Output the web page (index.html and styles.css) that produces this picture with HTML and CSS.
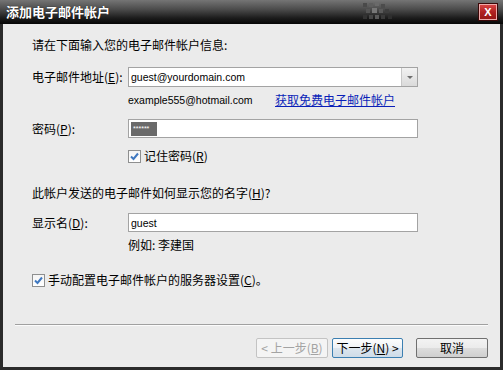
FILE: index.html
```html
<!DOCTYPE html>
<html lang="zh-CN">
<head>
    <meta charset="UTF-8">
    <title>添加电子邮件帐户</title>
    <link rel="stylesheet" href="styles.css">
</head>
<body>
<div class="window">
    <div class="titlebar">
        <span class="title">添加电子邮件帐户</span>
        <svg class="deco" width="30" height="20" viewBox="0 0 30 20">
            <rect x="0" y="1" width="4" height="4" fill="#4a4a4a"/>
            <rect x="6" y="1" width="4" height="4" fill="#5e5e5e"/>
            <rect x="12" y="0" width="4" height="4" fill="#6a6a6a"/>
            <rect x="18" y="2" width="4" height="4" fill="#4c4c4c"/>
            <rect x="3" y="7" width="4" height="4" fill="#555"/>
            <rect x="9" y="6" width="5" height="5" fill="#777"/>
            <rect x="16" y="7" width="4" height="4" fill="#5a5a5a"/>
            <rect x="22" y="7" width="4" height="4" fill="#3e3e3e"/>
            <rect x="0" y="13" width="4" height="4" fill="#333"/>
            <rect x="6" y="13" width="4" height="4" fill="#464646"/>
            <rect x="12" y="13" width="4" height="4" fill="#5a5a5a"/>
            <rect x="18" y="13" width="4" height="4" fill="#3a3a3a"/>
            <rect x="25" y="13" width="4" height="4" fill="#2e2e2e"/>
        </svg>
        <div class="close">X</div>
    </div>
    <div class="panel">
        <p class="intro">请在下面输入您的电子邮件帐户信息:</p>

        <div class="row row-email">
            <span class="lbl">电子邮件地址(<u>E</u>):</span>
            <div class="field combo">
                <span class="en">guest@yourdomain.com</span>
                <span class="drop"><i></i></span>
            </div>
        </div>
        <div class="sub">
            <span class="en sample">example555@hotmail.com</span>
            <a class="link" href="#">获取免费电子邮件帐户</a>
        </div>

        <div class="row row-pass">
            <span class="lbl">密码(<u>P</u>):</span>
            <div class="field small">
                <span class="stars">******</span>
            </div>
        </div>
        <div class="sub check-row">
            <span class="box"><svg width="13" height="13" viewBox="0 0 13 13"><path d="M3 6.5 L5.5 9 L10 3.5" fill="none" stroke="#3f78c0" stroke-width="2"/></svg></span>
            <span>记住密码(<u>R</u>)</span>
        </div>

        <p class="question">此帐户发送的电子邮件如何显示您的名字(<u>H</u>)?</p>

        <div class="row row-name">
            <span class="lbl">显示名(<u>D</u>):</span>
            <div class="field small">
                <span class="en">guest</span>
            </div>
        </div>
        <div class="sub">例如: 李建国</div>

        <div class="check-row manual">
            <span class="box"><svg width="13" height="13" viewBox="0 0 13 13"><path d="M3 6.5 L5.5 9 L10 3.5" fill="none" stroke="#3f78c0" stroke-width="2"/></svg></span>
            <span>手动配置电子邮件帐户的服务器设置(<u>C</u>)。</span>
        </div>

        <div class="footer">
            <div class="sep"></div>
            <div class="buttons">
                <span class="btn disabled">&lt; 上一步(<u>B</u>)</span>
                <span class="btn focus">下一步(<u>N</u>) &gt;</span>
                <span class="btn cancel">取消</span>
            </div>
        </div>
    </div>
</div>
</body>
</html>
```

FILE: styles.css
```css
* {
    margin: 0;
    padding: 0;
    box-sizing: border-box;
}

body {
    font: 12px/16px "Noto Sans CJK SC", "Liberation Sans", sans-serif;
    color: #000;
    background: #1e1e1e;
}

u {
    text-decoration: underline;
}

.window {
    width: 503px;
    height: 370px;
    display: flex;
    flex-direction: column;
}

.titlebar {
    position: relative;
    height: 24px;
    flex: none;
    display: flex;
    align-items: center;
    padding: 0 6px;
    background: linear-gradient(#757575, #4a4a4a 40%, #1c1c1c 75%, #060606);
}

.title {
    color: #fff;
    font-weight: bold;
    font-size: 13px;
    text-shadow: 0 0 1px #000;
}

.deco {
    flex: none;
    margin-left: auto;
    margin-right: 104px;
}

/* window control sits over the right end of the title bar */
.close {
    position: absolute;
    right: 6px;
    top: 4px;
    z-index: 2;
    width: 18px;
    height: 16px;
    background: linear-gradient(#d84444, #b02020 50%, #981616);
    border: 1px solid #eeaaaa;
    outline: 1px solid #3a0808;
    color: #fff;
    font: bold 11px/14px "Liberation Sans", sans-serif;
    text-align: center;
}

.panel {
    flex: 1;
    background: #ebebeb;
    border: 3px solid #2b2b2b;
    border-top: 0;
    padding: 13px 12px 9px 29px;
    display: flex;
    flex-direction: column;
}

.intro {
    margin-bottom: 14px;
}

.row {
    display: flex;
    align-items: center;
}

.lbl {
    width: 96px;
    flex: none;
}

.field {
    width: 290px;
    height: 20px;
    background: #fff;
    border: 1px solid #a3a3a3;
    display: flex;
    align-items: center;
    padding-left: 2px;
}

.field.small {
    height: 19px;
}

.en {
    font-family: "Liberation Sans", sans-serif;
    font-size: 10.5px;
}

.combo .en {
    flex: 1;
}

.drop {
    width: 16px;
    height: 18px;
    background: linear-gradient(#f2f2f2, #dadada);
    border-left: 1px solid #c8c8c8;
    display: flex;
    align-items: center;
    justify-content: center;
}

.drop i {
    width: 0;
    height: 0;
    border-left: 3px solid transparent;
    border-right: 3px solid transparent;
    border-top: 3px solid #6e6e6e;
}

.sub {
    margin-top: 5px;
    padding-left: 96px;
    display: flex;
    align-items: center;
}

.sample {
    width: 147px;
}

.link {
    color: #0a1fb8;
    text-decoration: underline;
}

.row-pass {
    margin-top: 11px;
}

.stars {
    background: #6a6a6a;
    color: #fff;
    font: 7px/14px "Liberation Sans", sans-serif;
    width: 26px;
    height: 14px;
    padding-left: 2px;
}

.check-row {
    display: flex;
    align-items: center;
}

.sub.check-row {
    margin-top: 10px;
}

.box {
    width: 13px;
    height: 13px;
    margin-right: 3px;
    border: 1px solid #8e8f8f;
    background: linear-gradient(#f4f4f4, #fff);
    display: flex;
}

.box svg {
    margin: -1px;
}

.question {
    margin-top: 21px;
}

.row-name {
    margin-top: 12px;
}

.manual {
    margin-top: 19px;
}

.footer {
    margin-top: auto;
}

.sep {
    margin-left: -17px;
    height: 2px;
    border-top: 1px solid #a0a0a0;
    border-bottom: 1px solid #fbfbfb;
}

.buttons {
    margin-top: 12px;
    display: flex;
    justify-content: flex-end;
}

.btn {
    width: 72px;
    height: 20px;
    line-height: 18px;
    text-align: center;
    border: 1px solid #707070;
    border-radius: 2px;
    background: linear-gradient(#f3f3f3, #ebebeb 50%, #dddddd 50%, #cfcfcf);
}

.btn.disabled {
    color: #a3a3a3;
    border-color: #c3c3c3;
    background: #f4f4f4;
}

.btn.focus {
    width: 71px;
    margin-left: 4px;
    border-color: #3c7fb1;
    background: linear-gradient(#fdfdfd, #eef2f6 50%, #dde6ee 50%, #cfdce8);
}

.btn.cancel {
    margin-left: 13px;
}
```
